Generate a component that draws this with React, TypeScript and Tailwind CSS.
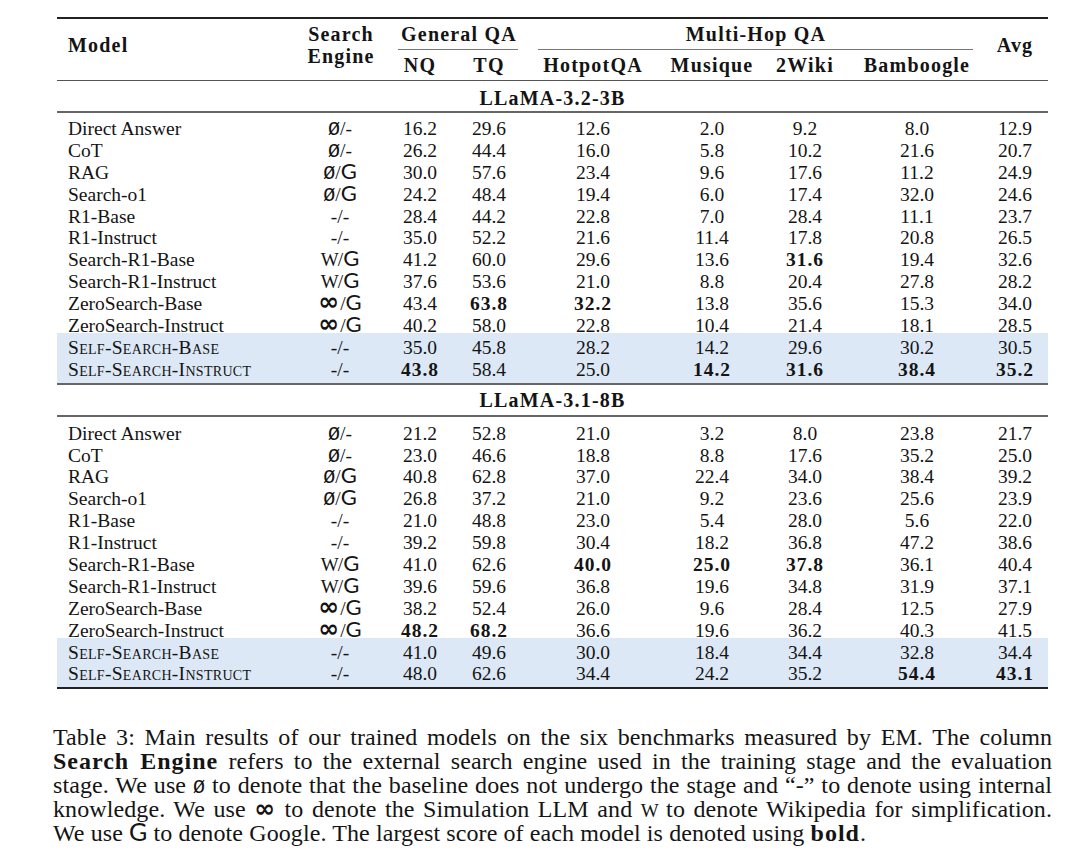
import type { ReactNode } from "react";

const COLS = "grid grid-cols-[243px_82px_76px_62px_146px_92px_94px_130px_66px]";

type Engine = "E-" | "EG" | "--" | "WG" | "IG";

interface Row {
  name: string;
  engine: Engine;
  vals: string[];
  ours?: boolean;
}

const LLAMA_3B: Row[] = [
  { name: "Direct Answer", engine: "E-", vals: ["16.2", "29.6", "12.6", "2.0", "9.2", "8.0", "12.9"] },
  { name: "CoT", engine: "E-", vals: ["26.2", "44.4", "16.0", "5.8", "10.2", "21.6", "20.7"] },
  { name: "RAG", engine: "EG", vals: ["30.0", "57.6", "23.4", "9.6", "17.6", "11.2", "24.9"] },
  { name: "Search-o1", engine: "EG", vals: ["24.2", "48.4", "19.4", "6.0", "17.4", "32.0", "24.6"] },
  { name: "R1-Base", engine: "--", vals: ["28.4", "44.2", "22.8", "7.0", "28.4", "11.1", "23.7"] },
  { name: "R1-Instruct", engine: "--", vals: ["35.0", "52.2", "21.6", "11.4", "17.8", "20.8", "26.5"] },
  { name: "Search-R1-Base", engine: "WG", vals: ["41.2", "60.0", "29.6", "13.6", "*31.6", "19.4", "32.6"] },
  { name: "Search-R1-Instruct", engine: "WG", vals: ["37.6", "53.6", "21.0", "8.8", "20.4", "27.8", "28.2"] },
  { name: "ZeroSearch-Base", engine: "IG", vals: ["43.4", "*63.8", "*32.2", "13.8", "35.6", "15.3", "34.0"] },
  { name: "ZeroSearch-Instruct", engine: "IG", vals: ["40.2", "58.0", "22.8", "10.4", "21.4", "18.1", "28.5"] },
  { name: "Self-Search-Base", engine: "--", ours: true, vals: ["35.0", "45.8", "28.2", "14.2", "29.6", "30.2", "30.5"] },
  { name: "Self-Search-Instruct", engine: "--", ours: true, vals: ["*43.8", "58.4", "25.0", "*14.2", "*31.6", "*38.4", "*35.2"] },
];

const LLAMA_8B: Row[] = [
  { name: "Direct Answer", engine: "E-", vals: ["21.2", "52.8", "21.0", "3.2", "8.0", "23.8", "21.7"] },
  { name: "CoT", engine: "E-", vals: ["23.0", "46.6", "18.8", "8.8", "17.6", "35.2", "25.0"] },
  { name: "RAG", engine: "EG", vals: ["40.8", "62.8", "37.0", "22.4", "34.0", "38.4", "39.2"] },
  { name: "Search-o1", engine: "EG", vals: ["26.8", "37.2", "21.0", "9.2", "23.6", "25.6", "23.9"] },
  { name: "R1-Base", engine: "--", vals: ["21.0", "48.8", "23.0", "5.4", "28.0", "5.6", "22.0"] },
  { name: "R1-Instruct", engine: "--", vals: ["39.2", "59.8", "30.4", "18.2", "36.8", "47.2", "38.6"] },
  { name: "Search-R1-Base", engine: "WG", vals: ["41.0", "62.6", "*40.0", "*25.0", "*37.8", "36.1", "40.4"] },
  { name: "Search-R1-Instruct", engine: "WG", vals: ["39.6", "59.6", "36.8", "19.6", "34.8", "31.9", "37.1"] },
  { name: "ZeroSearch-Base", engine: "IG", vals: ["38.2", "52.4", "26.0", "9.6", "28.4", "12.5", "27.9"] },
  { name: "ZeroSearch-Instruct", engine: "IG", vals: ["*48.2", "*68.2", "36.6", "19.6", "36.2", "40.3", "41.5"] },
  { name: "Self-Search-Base", engine: "--", ours: true, vals: ["41.0", "49.6", "30.0", "18.4", "34.4", "32.8", "34.4"] },
  { name: "Self-Search-Instruct", engine: "--", ours: true, vals: ["48.0", "62.6", "34.4", "24.2", "35.2", "*54.4", "*43.1"] },
];

// narrow slashed oval, close to LaTeX's \emptyset
const Empty = () => <span className="font-['Liberation_Mono',monospace] text-[20px] leading-[0]">Ø</span>;
const Google = ({ big }: { big?: boolean }) => (
  <span className={`font-['Lato',sans-serif] leading-[0] ${big ? "text-[25px]" : "text-[22px]"}`}>G</span>
);
const Wiki = () => <span className="font-['Liberation_Serif',serif] text-[19px] leading-[0] tracking-[-1px]">W</span>;
const Sim = () => (
  <span className="mr-[1px] font-['DejaVu_Sans',sans-serif] font-bold text-[25px] leading-[0]">∞</span>
);

function EngineCell({ e }: { e: Engine }) {
  let left: ReactNode = "-";
  let right: ReactNode = "-";
  if (e === "E-" || e === "EG") left = <Empty />;
  if (e === "WG") left = <Wiki />;
  if (e === "IG") left = <Sim />;
  if (e !== "E-" && e !== "--") right = <Google />;
  return (
    <div className="flex items-baseline justify-center pr-[2px]">
      {left}
      <span>/</span>
      {right}
    </div>
  );
}

function TableRow({ row, padBottom }: { row: Row; padBottom?: boolean }) {
  return (
    <div
      className={`${COLS} h-[21.9px] items-center ${row.ours ? "bg-[#dce8f5]" : ""} ${
        padBottom ? "box-content pb-[6px]" : ""
      }`}
    >
      <div className={`pl-[11px] ${row.ours ? "[font-variant-caps:small-caps] tracking-[0.3px]" : ""}`}>
        {row.name}
      </div>
      <EngineCell e={row.engine} />
      {row.vals.map((v, i) =>
        v.startsWith("*") ? (
          <div key={i} className="text-center font-bold tracking-[1px]">
            {v.slice(1)}
          </div>
        ) : (
          <div key={i} className="text-center">
            {v}
          </div>
        )
      )}
    </div>
  );
}

function Block({ title, rows, first }: { title: string; rows: Row[]; first?: boolean }) {
  return (
    <>
      <div
        className={`flex h-[30px] items-center justify-center font-bold tracking-[1.2px] text-[20px] ${
          first ? "pt-[3px]" : ""
        }`}
      >
        {title}
      </div>
      <div className="h-[2px] bg-[#666]" />
      <div className={first ? "pt-px" : "pt-[2px]"}>
        {rows.map((r, i) => (
          <TableRow key={r.name} row={r} padBottom={i === rows.length - 1} />
        ))}
      </div>
    </>
  );
}

export default function App() {
  return (
    <div className="w-[1080px] min-h-[856px] bg-white pt-[17px] text-[#141414] font-['Liberation_Serif',serif]">
      <div className="ml-[57px] w-[991px] text-[19.5px]">
        <div className="h-[2px] bg-[#222]" />

        {/* header */}
        <div className={`${COLS} grid-rows-[31px_30px] font-bold text-[20px] tracking-[1.2px] leading-[22px]`}>
          <div className="row-span-2 pl-[11px] pt-[15px]">Model</div>
          <div className="row-span-2 pt-[4px] text-center">
            Search
            <br />
            Engine
          </div>
          <div className="col-span-2 flex flex-col">
            <div className="flex h-[30px] items-center justify-center pl-[16px]">General QA</div>
            <div className="ml-[16px] mr-[2px] h-px bg-[#777]" />
          </div>
          <div className="col-span-4 flex flex-col">
            <div className="flex h-[30px] items-center justify-center pl-[10px]">Multi-Hop QA</div>
            <div className="ml-[18px] mr-[9px] h-px bg-[#777]" />
          </div>
          <div className="row-span-2 pt-[15px] text-center">Avg</div>
          <div className="flex items-center justify-center">NQ</div>
          <div className="flex items-center justify-center">TQ</div>
          <div className="flex items-center justify-center">HotpotQA</div>
          <div className="flex items-center justify-center">Musique</div>
          <div className="flex items-center justify-center">2Wiki</div>
          <div className="flex items-center justify-center">Bamboogle</div>
        </div>
        <div className="h-px bg-[#555]" />

        <Block title="LLaMA-3.2-3B" rows={LLAMA_3B} first />
        <div className="h-[2px] bg-[#666]" />
        <Block title="LLaMA-3.1-8B" rows={LLAMA_8B} />
        <div className="h-[2px] bg-[#222]" />
      </div>

      {/* caption */}
      <div className="ml-[53px] mt-[37px] w-[999px] text-[24px] tracking-[0.1px] leading-[23.8px]">
        <div className="h-[23.8px] whitespace-nowrap text-justify [text-align-last:justify]">
          Table 3: Main results of our trained models on the six benchmarks measured by EM. The column
        </div>
        <div className="h-[23.8px] whitespace-nowrap text-justify [text-align-last:justify]">
          <b className="tracking-[1px]">Search Engine</b> refers to the external search engine used in the training stage and the evaluation
        </div>
        <div className="h-[23.8px] whitespace-nowrap text-justify [text-align-last:justify]">
          stage. We use <Empty /> to denote that the baseline does not undergo the stage and “-” to denote using internal
        </div>
        <div className="h-[23.8px] whitespace-nowrap text-justify [text-align-last:justify]">
          knowledge. We use <Sim /> to denote the Simulation LLM and <Wiki /> to denote Wikipedia for simplification.
        </div>
        <div className="h-[23.8px] whitespace-nowrap">
          We use <Google big /> to denote Google. The largest score of each model is denoted using{" "}
          <b className="tracking-[1px]">bold</b>.
        </div>
      </div>
    </div>
  );
}
